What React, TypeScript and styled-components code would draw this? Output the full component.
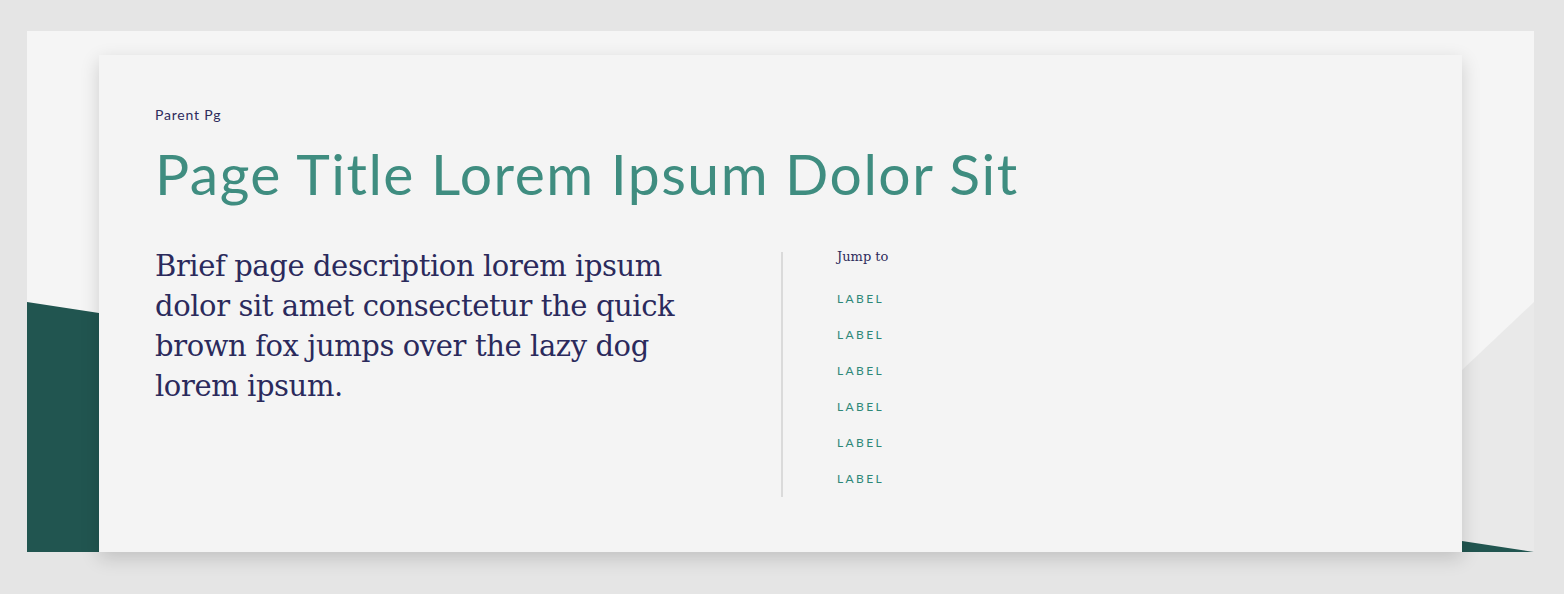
import styled, { createGlobalStyle } from 'styled-components';

const GlobalStyle = createGlobalStyle`
  html, body {
    margin: 0;
    padding: 0;
    background: #e5e5e5;
  }
`;

const Page = styled.div`
  padding: 31px 30px 42px 27px;
`;

// Light frame holding the decorative shapes; the card sits inside it
const Frame = styled.div`
  position: relative;
  width: 1507px;
  height: 521px;
  background: #f5f5f5;
  padding: 24px 72px 0;
  box-sizing: border-box;
`;

const Shapes = styled.svg`
  position: absolute;
  inset: 0;
  width: 100%;
  height: 100%;
`;

const Card = styled.div`
  position: relative;
  z-index: 1;
  height: 497px;
  box-sizing: border-box;
  background: #f4f4f4;
  box-shadow: 0 6px 18px rgba(0, 0, 0, 0.16);
  padding: 52px 56px 0;
`;

const Crumb = styled.div`
  font-family: Lato, 'Liberation Sans', sans-serif;
  font-size: 14px;
  line-height: 16px;
  letter-spacing: 0.8px;
  color: #2e2b5c;
`;

const Title = styled.h1`
  margin: 16px 0 0;
  font-family: Lato, 'Liberation Sans', sans-serif;
  font-weight: 400;
  font-size: 57px;
  line-height: 68px;
  letter-spacing: 1.5px;
  color: #3f8d80;
`;

const Columns = styled.div`
  display: grid;
  grid-template-columns: 626px 2px 1fr;
  align-items: start;
  margin-top: 39px;
`;

const Description = styled.p`
  margin: 0;
  width: 540px;
  font-family: 'DejaVu Serif', serif;
  font-size: 29px;
  line-height: 40px;
  letter-spacing: -0.4px;
  color: #2b2a5c;
`;

const Divider = styled.div`
  background: #dadada;
  margin-top: 6px;
  height: 245px;
`;

const Jump = styled.nav`
  padding: 3px 0 0 54px;
  display: flex;
  flex-direction: column;
  align-items: flex-start;
`;

const JumpHeading = styled.div`
  font-family: 'DejaVu Serif', serif;
  font-size: 13px;
  line-height: 16px;
  color: #2e2b5c;
  margin-bottom: 16px;
`;

const JumpLink = styled.a`
  font-family: Lato, 'Liberation Sans', sans-serif;
  font-size: 12px;
  font-weight: 400;
  line-height: 36px;
  letter-spacing: 2.4px;
  color: #2f8878;
  text-decoration: none;
`;

const labels = ['LABEL', 'LABEL', 'LABEL', 'LABEL', 'LABEL', 'LABEL'];

export default function App() {
  return (
    <Page>
      <GlobalStyle />
      <Frame>
        <Shapes viewBox="0 0 1507 521" preserveAspectRatio="none">
          <polygon points="1507,271 1435,339 1435,521 1507,521" fill="#e9e9e9" />
          <polygon points="0,271 72,282 1435,510 1507,521 0,521" fill="#215550" />
        </Shapes>
        <Card>
          <Crumb>Parent Pg</Crumb>
          <Title>Page Title Lorem Ipsum Dolor Sit</Title>
          <Columns>
            <Description>
              Brief page description lorem ipsum dolor sit amet consectetur the quick brown fox jumps over the lazy dog
              lorem ipsum.
            </Description>
            <Divider />
            <Jump>
              <JumpHeading>Jump to</JumpHeading>
              {labels.map((label, i) => (
                <JumpLink key={i} href="#">
                  {label}
                </JumpLink>
              ))}
            </Jump>
          </Columns>
        </Card>
      </Frame>
    </Page>
  );
}
